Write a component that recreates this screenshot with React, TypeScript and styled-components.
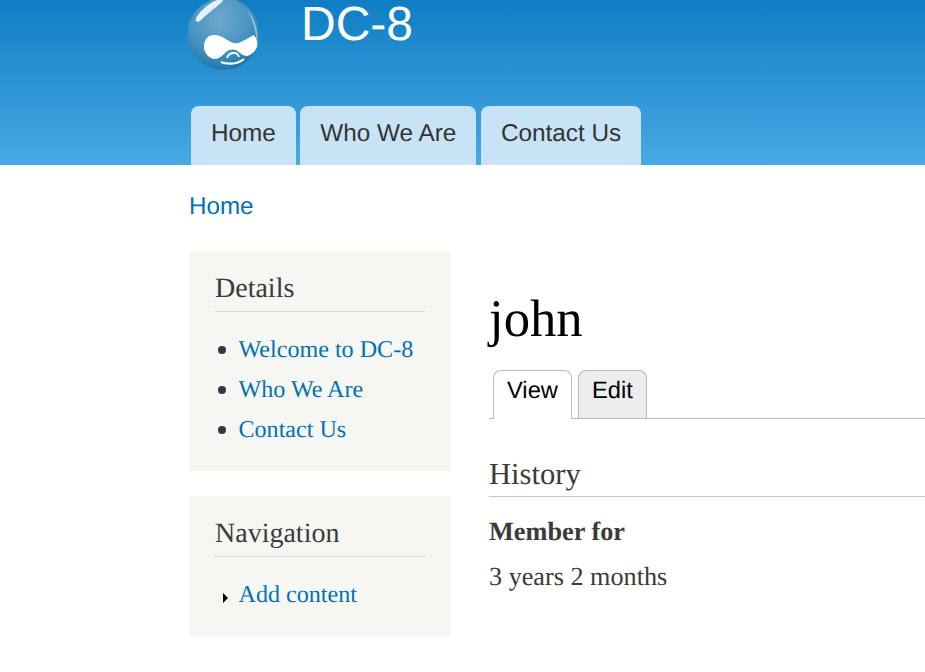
import React from 'react';
import styled, { createGlobalStyle } from 'styled-components';

const Global = createGlobalStyle`
  html, body { margin: 0; padding: 0; background: #fff; }
  body {
    font-family: "Liberation Serif", serif;
    color: #3b3b3b;
    overflow: hidden;
    text-rendering: geometricPrecision;
  }
  a { text-decoration: none; color: #0071b3; }
`;

const Page = styled.div`
  width: 925px;
  height: 672px;
  overflow: hidden;
`;

const Header = styled.header`
  height: 165px;
  padding-left: 187px;
  box-sizing: border-box;
  background: linear-gradient(to bottom, #0f7ec4 0%, #48a9e4 100%);
  display: flex;
  flex-direction: column;
  font-family: "Liberation Sans", sans-serif;
`;

const Brand = styled.div`
  display: flex;
  align-items: flex-start;
  height: 106px;
`;

const Logo = styled.svg`
  width: 74px;
  height: 74px;
  margin-top: -3px;
  flex: none;
`;

const SiteName = styled.div`
  margin-left: 40px;
  margin-top: 1px;
  font-size: 48px;
  line-height: 48px;
  color: #fff;
`;

const MainMenu = styled.nav`
  display: flex;
  gap: 4.5px;
  padding-left: 4px;
  height: 59px;
`;

const MenuTab = styled.a`
  padding: 13px 20px 0;
  font-size: 24.32px;
  line-height: 30px;
  color: #333;
  background: #c9e3f6;
  border-radius: 8px 8px 0 0;
`;

const Columns = styled.div`
  padding-left: 189px;
`;

const Breadcrumb = styled.a`
  display: block;
  padding-top: 27px;
  height: 59px;
  font-family: "Liberation Sans", sans-serif;
  font-size: 24.2px;
  line-height: 30px;
`;

const Body = styled.div`
  display: flex;
  gap: 38px;
`;

const Sidebar = styled.aside`
  width: 262px;
  flex: none;
  display: flex;
  flex-direction: column;
  gap: 25px;
`;

const Block = styled.section<{ $tail: number }>`
  background: #f6f6f2;
  padding: 21px 26px ${(p) => p.$tail}px;
`;

const BlockTitle = styled.h2`
  margin: 0;
  padding-bottom: 6px;
  font-size: 28px;
  line-height: 33px;
  font-weight: 400;
  color: #3b3b3b;
  border-bottom: 1px solid #d6d6d6;
`;

const LinkList = styled.ul<{ $mark: 'disc' | 'arrow' }>`
  list-style: none;
  margin: 18px 0 0;
  padding: 0;
  li {
    position: relative;
    padding-left: 23.5px;
    font-size: 24.1px;
    line-height: 40px;
  }
  li::before {
    content: '';
    position: absolute;
    ${(p) =>
      p.$mark === 'disc'
        ? `left: 3px; top: 16px; width: 8px; height: 8px; border-radius: 50%; background: #2f3a48;`
        : `left: 8px; top: 18px; border-left: 5px solid #000; border-top: 5px solid transparent; border-bottom: 5px solid transparent;`}
  }
`;

const Main = styled.main`
  width: 436px;
  flex: none;
  padding-top: 34px;
`;

const Title = styled.h1`
  margin: 0;
  font-size: 52.7px;
  line-height: 68px;
  font-weight: 400;
  color: #000;
`;

const Tabs = styled.div`
  display: flex;
  gap: 6px;
  padding-left: 4px;
  margin-top: 17px;
  height: 49px;
  box-sizing: border-box;
  border-bottom: 1px solid #bbb;
  font-family: "Liberation Sans", sans-serif;
`;

const Tab = styled.a<{ $active?: boolean }>`
  box-sizing: border-box;
  height: ${(p) => (p.$active ? '49px' : '48px')};
  padding: 5px 13px 0;
  font-size: 23.7px;
  line-height: 30px;
  color: #000;
  background: ${(p) => (p.$active ? '#fff' : '#ededed')};
  border: 1px solid #bbb;
  border-bottom: 0;
  border-radius: 8px 8px 0 0;
`;

const SectionTitle = styled.h2`
  margin: 37px 0 0;
  padding-bottom: 4px;
  font-size: 30.6px;
  line-height: 36px;
  font-weight: 400;
  color: #3b3b3b;
  border-bottom: 1px solid #c8c8c8;
`;

const Label = styled.div`
  margin-top: 20px;
  font-size: 26.3px;
  line-height: 30px;
  font-weight: 700;
`;

const Value = styled.div`
  margin-top: 15px;
  font-size: 26.2px;
  line-height: 30px;
`;

const DrupalLogo = () => (
  <Logo viewBox="0 0 74 74">
    <defs>
      <radialGradient id="drop" cx="0.45" cy="0.3" r="0.75">
        <stop offset="0" stopColor="#6ea9cd" />
        <stop offset="0.55" stopColor="#4a94c2" />
        <stop offset="0.85" stopColor="#2a7fb0" />
        <stop offset="1" stopColor="#1a6a9c" />
      </radialGradient>
      <filter id="soft" x="-10%" y="-10%" width="120%" height="120%">
        <feGaussianBlur stdDeviation="0.5" />
      </filter>
    </defs>
    <circle cx="36.5" cy="37" r="36" fill="url(#drop)" />
    <g filter="url(#soft)">
      <path d="M9 21C15 11 24 5 33 2 36 1 37 3 35 5 28 11 19 18 13 24 10 26 8 24 9 21Z" fill="#e6f1f7" />
      <path d="M60 12C68 22 72 34 70 46 69 35 66 23 60 12Z" fill="#8fc3df" />
      <path
        d="M17 48C18 41 22 38 27 38C33 38 37 41 42 44C45 46 48 46.5 51 46C56 45 62 40 67 38C70 42 71 46 70 50C68 55 64 58 60 59C56 59 53 56 50 53.5C47 52 43 52 39 55C35 59 32 62 28 62C22 62 16 55 17 48Z"
        fill="#fff"
      />
      <path d="M40 61C42 55 50 54 52 60" fill="none" stroke="#fff" strokeWidth="1.8" />
      <path d="M34 65C41 68 51 67 57 62" fill="none" stroke="#fff" strokeWidth="2.2" />
    </g>
  </Logo>
);

export default function App() {
  return (
    <Page>
      <Global />
      <Header>
        <Brand>
          <DrupalLogo />
          <SiteName>DC-8</SiteName>
        </Brand>
        <MainMenu>
          <MenuTab href="#">Home</MenuTab>
          <MenuTab href="#">Who We Are</MenuTab>
          <MenuTab href="#">Contact Us</MenuTab>
        </MainMenu>
      </Header>
      <Columns>
        <Breadcrumb href="#">Home</Breadcrumb>
        <Body>
          <Sidebar>
            <Block $tail={21}>
              <BlockTitle>Details</BlockTitle>
              <LinkList $mark="disc">
                <li><a href="#">Welcome to DC-8</a></li>
                <li><a href="#">Who We Are</a></li>
                <li><a href="#">Contact Us</a></li>
              </LinkList>
            </Block>
            <Block $tail={22}>
              <BlockTitle>Navigation</BlockTitle>
              <LinkList $mark="arrow">
                <li><a href="#">Add content</a></li>
              </LinkList>
            </Block>
          </Sidebar>
          <Main>
            <Title>john</Title>
            <Tabs>
              <Tab href="#" $active>View</Tab>
              <Tab href="#">Edit</Tab>
            </Tabs>
            <SectionTitle>History</SectionTitle>
            <Label>Member for</Label>
            <Value>3 years 2 months</Value>
          </Main>
        </Body>
      </Columns>
    </Page>
  );
}
